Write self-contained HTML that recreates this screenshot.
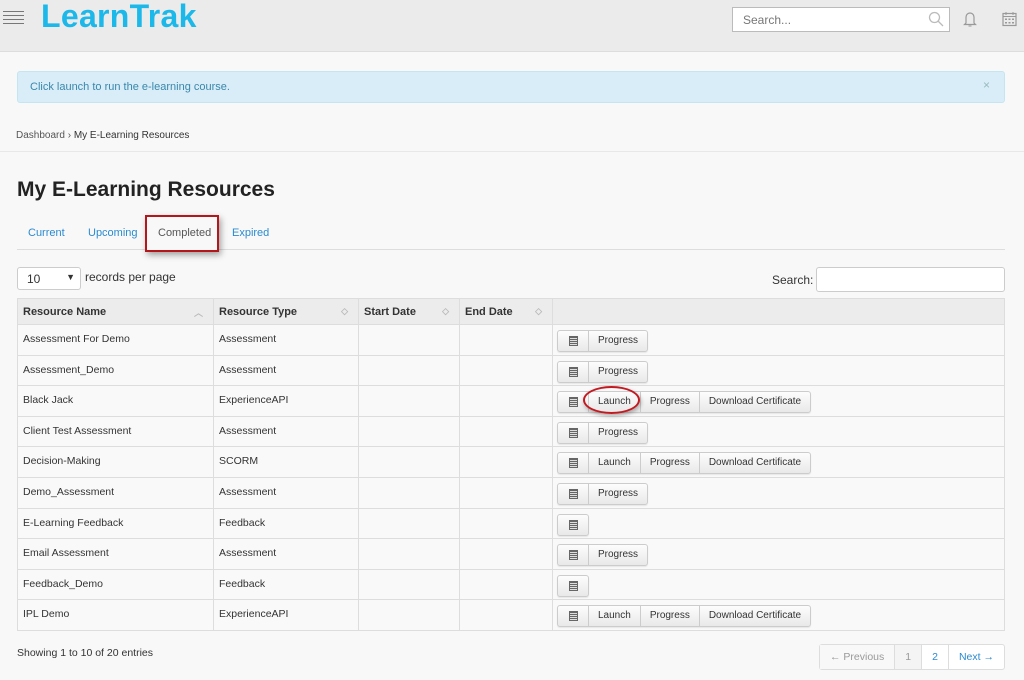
<!DOCTYPE html>
<html><head><meta charset="utf-8"><style>
*{box-sizing:border-box;margin:0;padding:0}
body{width:1024px;height:680px;overflow:hidden;background:#f8f8f8;font-family:"Liberation Sans",Arial,sans-serif;color:#333;position:relative}
.hdr{position:absolute;left:0;top:0;width:1024px;height:52px;background:#ebebeb;border-bottom:1px solid #ddd}
.burger{position:absolute;left:3px;top:11px;width:21px}
.burger div{height:1px;background:#777;margin-bottom:3px}
.logo{position:absolute;left:41px;top:-2px;font-size:32px;color:#1cb8ea;font-weight:bold;letter-spacing:0.3px}
.srch{position:absolute;left:732px;top:7px;width:218px;height:25px;background:#fff;border:1px solid #bbb;font-size:12px;color:#777;padding:5px 10px}
.alert{position:absolute;left:17px;top:71px;width:988px;height:32px;background:#d8edf7;border:1px solid #c5e5f2;border-radius:3px;font-size:11px;color:#3a87ad;padding:9px 12px}
.alert .x{position:absolute;right:14px;top:6px;color:#9bb;font-size:12px}
.bc{position:absolute;left:16px;top:130px;font-size:10px;color:#555}
.bc span{color:#333}
.hr{position:absolute;left:0;top:151px;width:1024px;height:1px;background:#e8e8e8}
h1{position:absolute;left:17px;top:178px;font-size:21px;font-weight:bold;color:#222}
.tabs{position:absolute;left:17px;top:227px;font-size:11px;color:#2a8ad0}
.tabs span{position:absolute;white-space:nowrap}
.tabline{position:absolute;left:17px;top:249px;width:988px;height:1px;background:#ddd}
.comp{position:absolute;left:145px;top:215px;width:74px;height:37px;border:2px solid #b3161b;box-shadow:2px 3px 6px rgba(0,0,0,.35);background:#f8f8f8}
.sel{position:absolute;left:17px;top:267px;width:64px;height:23px;border:1px solid #ccc;border-radius:3px;background:#fff;font-size:12px;padding:4px 9px}
.lbl{position:absolute;font-size:12px;color:#333}
.sbox{position:absolute;left:816px;top:267px;width:189px;height:25px;border:1px solid #ccc;border-radius:3px;background:#fff}
table{position:absolute;left:17px;top:298px;width:988px;border-collapse:collapse;font-size:10.5px}
th{background:#ececec;height:26px;text-align:left;padding:0 5px;border:1px solid #ddd;font-weight:bold;color:#333;font-size:11px;position:relative}
th i{position:absolute;right:10px;top:7px;font-style:normal;color:#bbb;font-size:9px}
td{height:30.6px;border:1px solid #ddd;vertical-align:top;padding:8px 5px 0;background:#f9f9f9}
td.b{padding:5px 4px 0}
.bg{display:inline-flex;border:1px solid #ccc;border-radius:3px;background:linear-gradient(#fdfdfd,#e9e9e9);height:22px;box-shadow:0 1px 1px rgba(0,0,0,.08)}
.bg span{padding:0 9px;line-height:20px;font-size:10px;border-left:1px solid #ccc;color:#333}
.bg span:first-child{border-left:0;width:30px;padding:0;display:flex;align-items:center;justify-content:center}
.ic{width:9px;height:10px;border:1px solid #666;background:repeating-linear-gradient(#666 0 1px,#ddd 1px 2px)}
.circ{position:absolute;left:583px;top:386px;width:57px;height:28px;border:2px solid #c21a20;border-radius:50%;box-shadow:1px 2px 4px rgba(0,0,0,.3)}
.foot{position:absolute;left:17px;top:647px;font-size:10.5px}
.pg{position:absolute;left:819px;top:644px;width:186px;height:26px;display:flex;border:1px solid #ddd;border-radius:3px;font-size:10.5px;background:#fff}
.pg span{padding:0 10px;line-height:24px;border-left:1px solid #ddd;color:#2a8ad0;white-space:nowrap}
.pg span:first-child{border-left:0;color:#999;background:#f8f8f8}
.pg span.a{color:#999;background:#f4f4f4}
</style></head><body>
<div class="hdr">
<div class="burger"><div></div><div></div><div></div><div></div></div>
<div class="logo">LearnTrak</div>
<div class="srch">Search...</div>
<svg style="position:absolute;left:928px;top:11px" width="16" height="16"><circle cx="6.5" cy="6.5" r="5" fill="none" stroke="#bbb" stroke-width="1.3"/><line x1="10" y1="10" x2="15" y2="15" stroke="#bbb" stroke-width="1.3"/></svg>
<svg style="position:absolute;left:962px;top:10px" width="16" height="18"><path d="M4 13V7a4 4 0 0 1 8 0v6l1.5 1.5h-11z" fill="none" stroke="#999" stroke-width="1.2"/><path d="M6.5 16h3" stroke="#999"/></svg>
<svg style="position:absolute;left:1002px;top:11px" width="16" height="16"><rect x="1" y="2.5" width="13" height="12" fill="none" stroke="#999" stroke-width="1.2"/><line x1="1" y1="5.5" x2="14" y2="5.5" stroke="#999"/><path d="M4 1v3M11 1v3" stroke="#999"/><g fill="#999"><rect x="3" y="7.5" width="2" height="1.5"/><rect x="6.5" y="7.5" width="2" height="1.5"/><rect x="10" y="7.5" width="2" height="1.5"/><rect x="3" y="11" width="2" height="1.5"/><rect x="6.5" y="11" width="2" height="1.5"/><rect x="10" y="11" width="2" height="1.5"/></g></svg>
</div>
<div class="alert">Click launch to run the e-learning course.<span class="x">×</span></div>
<div class="bc">Dashboard › <span>My E-Learning Resources</span></div>
<div class="hr"></div>
<h1>My E-Learning Resources</h1>
<div class="tabline"></div>
<div class="comp"></div>
<div class="tabs"><span style="left:11px">Current</span><span style="left:71px">Upcoming</span><span style="left:141px;color:#555">Completed</span><span style="left:215px">Expired</span></div>
<div class="sel">10<span style="position:absolute;right:5px;top:4px;font-size:9px">▼</span></div>
<div class="lbl" style="left:85px;top:270px">records per page</div>
<div class="lbl" style="left:772px;top:273px">Search:</div>
<div class="sbox"></div>
<table>
<tr><th style="width:196px">Resource Name<i>︿</i></th><th style="width:145px">Resource Type<i>◇</i></th><th style="width:101px">Start Date<i>◇</i></th><th style="width:93px">End Date<i>◇</i></th><th></th></tr>
<tr><td>Assessment For Demo</td><td>Assessment</td><td></td><td></td><td class="b"><div class="bg"><span><i class="ic"></i></span><span>Progress</span></div></td></tr>
<tr><td>Assessment_Demo</td><td>Assessment</td><td></td><td></td><td class="b"><div class="bg"><span><i class="ic"></i></span><span>Progress</span></div></td></tr>
<tr><td>Black Jack</td><td>ExperienceAPI</td><td></td><td></td><td class="b"><div class="bg"><span><i class="ic"></i></span><span>Launch</span><span>Progress</span><span>Download Certificate</span></div></td></tr>
<tr><td>Client Test Assessment</td><td>Assessment</td><td></td><td></td><td class="b"><div class="bg"><span><i class="ic"></i></span><span>Progress</span></div></td></tr>
<tr><td>Decision-Making</td><td>SCORM</td><td></td><td></td><td class="b"><div class="bg"><span><i class="ic"></i></span><span>Launch</span><span>Progress</span><span>Download Certificate</span></div></td></tr>
<tr><td>Demo_Assessment</td><td>Assessment</td><td></td><td></td><td class="b"><div class="bg"><span><i class="ic"></i></span><span>Progress</span></div></td></tr>
<tr><td>E-Learning Feedback</td><td>Feedback</td><td></td><td></td><td class="b"><div class="bg"><span><i class="ic"></i></span></div></td></tr>
<tr><td>Email Assessment</td><td>Assessment</td><td></td><td></td><td class="b"><div class="bg"><span><i class="ic"></i></span><span>Progress</span></div></td></tr>
<tr><td>Feedback_Demo</td><td>Feedback</td><td></td><td></td><td class="b"><div class="bg"><span><i class="ic"></i></span></div></td></tr>
<tr><td>IPL Demo</td><td>ExperienceAPI</td><td></td><td></td><td class="b"><div class="bg"><span><i class="ic"></i></span><span>Launch</span><span>Progress</span><span>Download Certificate</span></div></td></tr>
</table>
<div class="circ"></div>
<div class="foot">Showing 1 to 10 of 20 entries</div>
<div class="pg"><span>← Previous</span><span class="a">1</span><span>2</span><span style="flex:1">Next →</span></div>
</body></html>
